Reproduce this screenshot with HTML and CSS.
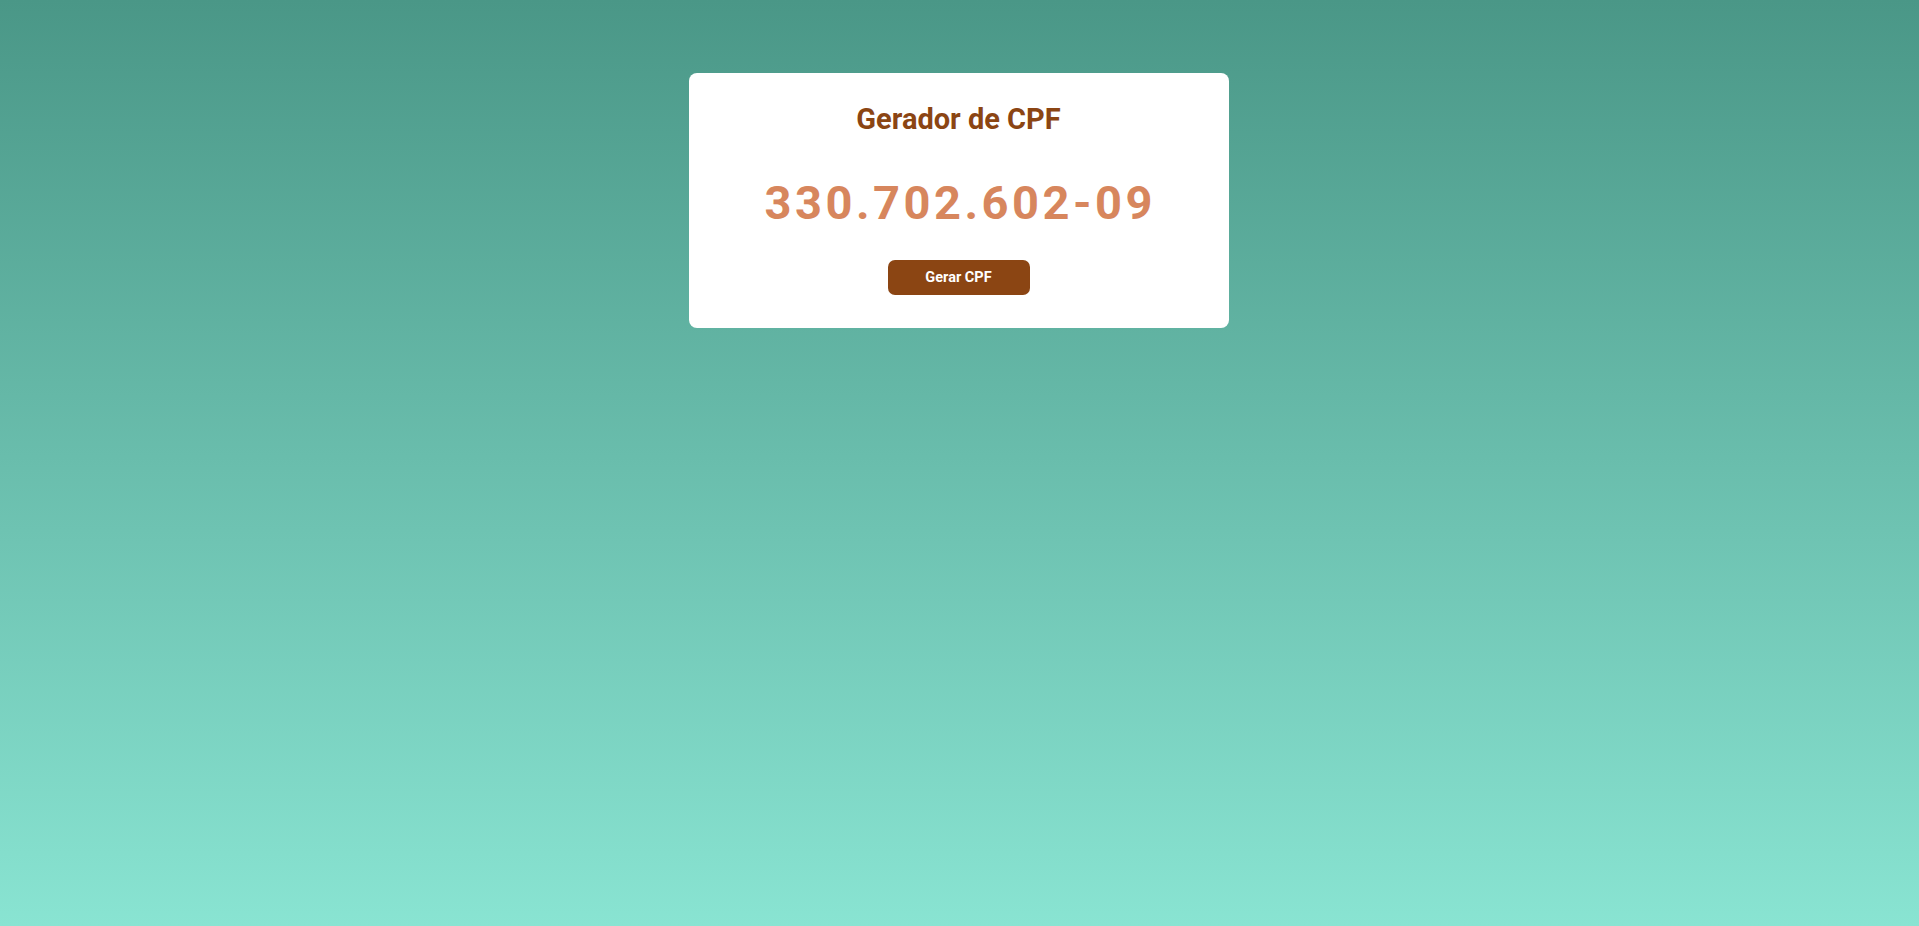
FILE: index.html
```html
<!DOCTYPE html>
<html lang="pt-BR">
<head>
<meta charset="utf-8">
<title>Gerador de CPF</title>
<link rel="stylesheet" href="styles.css">
</head>
<body>
<main class="page">
  <section class="card">
    <h1 class="title">Gerador de CPF</h1>
    <p class="cpf">330.702.602-09</p>
    <button class="btn" type="button">Gerar CPF</button>
  </section>
</main>
</body>
</html>
```

FILE: styles.css
```css
html, body {
  margin: 0;
  padding: 0;
  height: 100%;
}
body {
  background: linear-gradient(to bottom, #4a9787 0%, #89e4d2 100%);
  font-family: Roboto, "Liberation Sans", Arial, sans-serif;
}
.page {
  display: flex;
  justify-content: center;
  padding-top: 73px;
  padding-right: 2px;
}
.card {
  width: 540px;
  height: 255px;
  box-sizing: border-box;
  background: #ffffff;
  border-radius: 8px;
  display: flex;
  flex-direction: column;
  align-items: center;
  padding-top: 26px;
}
.title {
  margin: 0;
  font-size: 29px;
  font-weight: 700;
  color: #8b4513;
  line-height: 40px;
}
.cpf {
  margin: 36px 0 0 0;
  font-size: 47px;
  font-weight: 700;
  letter-spacing: 3.5px;
  padding-left: 3.5px;
  color: #d7865d;
  line-height: 56px;
}
.btn {
  margin-top: 29px;
  width: 142px;
  height: 35px;
  border: none;
  border-radius: 7px;
  background: #8b4513;
  color: #ffffff;
  font-family: Roboto, "Liberation Sans", Arial, sans-serif;
  font-size: 14.5px;
  font-weight: 700;
  cursor: pointer;
}
```
